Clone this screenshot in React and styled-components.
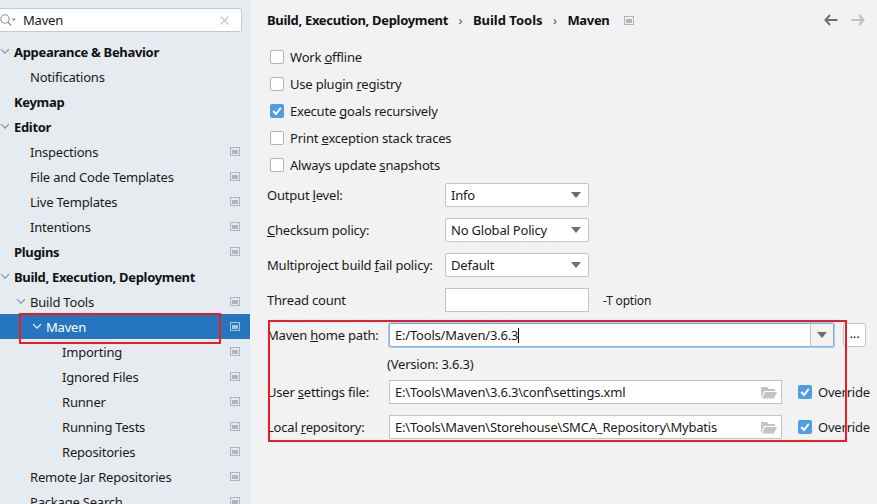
import React from "react";
import styled, { createGlobalStyle } from "styled-components";

const tree = [
  { label: "Appearance & Behavior", level: 0, bold: true, open: true },
  { label: "Notifications", level: 1 },
  { label: "Keymap", level: 0, bold: true },
  { label: "Editor", level: 0, bold: true, open: true },
  { label: "Inspections", level: 1, badge: true },
  { label: "File and Code Templates", level: 1, badge: true },
  { label: "Live Templates", level: 1, badge: true },
  { label: "Intentions", level: 1, badge: true },
  { label: "Plugins", level: 0, bold: true, badge: true },
  { label: "Build, Execution, Deployment", level: 0, bold: true, open: true },
  { label: "Build Tools", level: 1, open: true, badge: true },
  { label: "Maven", level: 2, open: true, badge: true, selected: true },
  { label: "Importing", level: 3, badge: true },
  { label: "Ignored Files", level: 3, badge: true },
  { label: "Runner", level: 3, badge: true },
  { label: "Running Tests", level: 3, badge: true },
  { label: "Repositories", level: 3, badge: true },
  { label: "Remote Jar Repositories", level: 1, badge: true },
  { label: "Package Search", level: 1, badge: true },
];

const ProjectIcon = ({ color = "#afb5ba" }) => (
  <svg width="10" height="9" viewBox="0 0 10 9">
    <rect x="0.5" y="0.5" width="9" height="8" fill="none" stroke={color} />
    <rect x="2" y="3" width="6" height="4" fill={color} />
  </svg>
);

const Chevron = ({ color = "#8d9094" }) => (
  <svg width="10" height="7" viewBox="0 0 10 7">
    <path d="M1 1.2 L5 5.2 L9 1.2" fill="none" stroke={color} strokeWidth="1.2" />
  </svg>
);

const SearchIcon = () => (
  <svg width="17" height="14" viewBox="0 0 17 14">
    <circle cx="5" cy="6" r="4.2" fill="none" stroke="#8f9499" strokeWidth="1.1" />
    <path d="M8 9 L11 12.5" stroke="#8f9499" strokeWidth="1.3" />
    <path d="M11.5 5.5 H16 L13.75 8 Z" fill="#8f9499" />
  </svg>
);

const ClearIcon = () => (
  <svg width="9" height="9" viewBox="0 0 9 9">
    <path d="M0.5 0.5 L8.5 8.5 M8.5 0.5 L0.5 8.5" stroke="#c4c7ca" strokeWidth="1.1" />
  </svg>
);

const CheckMark = () => (
  <svg width="14" height="14" viewBox="0 0 14 14">
    <path d="M3.2 7 L6 10 L10.8 3.8" fill="none" stroke="#fff" strokeWidth="1.9" />
  </svg>
);

const FolderIcon = () => (
  <svg width="16" height="13" viewBox="0 0 16 13">
    <path d="M0 1 H6 L7.5 3 H14 V5 H3.2 L0 12 Z" fill="#c2c5c7" />
    <path d="M4 6 H16 L13 12.5 H1 Z" fill="#c2c5c7" />
  </svg>
);

const ArrowIcon = ({ color, flip }) => (
  <svg width="14" height="12" viewBox="0 0 14 12" style={flip ? { transform: "scaleX(-1)" } : undefined}>
    <path d="M6 1 L1.5 6 L6 11 M2 6 H13.5" fill="none" stroke={color} strokeWidth="2" />
  </svg>
);

const CheckRow = ({ checked, children }) => (
  <CheckLine>
    <CheckBox $checked={checked}>{checked && <CheckMark />}</CheckBox>
    <CheckText>{children}</CheckText>
  </CheckLine>
);

const Select = ({ value }) => (
  <SelectBox>
    {value}
    <Caret />
  </SelectBox>
);

export default function App() {
  return (
    <Window>
      <GlobalStyle />
      <Sidebar>
        <SearchBox>
          <SearchIcon />
          <SearchText>Maven</SearchText>
          <ClearIcon />
        </SearchBox>
        <Tree>
          {tree.map((item) => (
            <TreeRow key={item.label} $level={item.level} $selected={item.selected} $bold={item.bold}>
              {item.open && (
                <Toggle>
                  <Chevron color={item.selected ? "#fff" : "#8d9094"} />
                </Toggle>
              )}
              <TreeLabel>{item.label}</TreeLabel>
              {item.badge && (
                <Badge>
                  <ProjectIcon color={item.selected ? "#a9c6e2" : "#afb5ba"} />
                </Badge>
              )}
            </TreeRow>
          ))}
        </Tree>
        <Highlight />
      </Sidebar>
      <Content>
        <Header>
          <Crumb $spacing={-0.32}>Build, Execution, Deployment</Crumb>
          <Sep>›</Sep>
          <Crumb $spacing={0}>Build Tools</Crumb>
          <Sep>›</Sep>
          <Crumb $spacing={-0.32}>Maven</Crumb>
          <HeaderBadge>
            <ProjectIcon />
          </HeaderBadge>
          <NavArrows>
            <ArrowIcon color="#6e6e6e" />
            <ArrowIcon color="#c0c0c0" flip />
          </NavArrows>
        </Header>
        <Checks>
          <CheckRow>Work <u>o</u>ffline</CheckRow>
          <CheckRow>Use plugin <u>r</u>egistry</CheckRow>
          <CheckRow checked>Execute <u>g</u>oals recursively</CheckRow>
          <CheckRow>Print <u>e</u>xception stack traces</CheckRow>
          <CheckRow>Always update <u>s</u>napshots</CheckRow>
        </Checks>
        <OptionGrid>
          <FieldLabel>Output <u>l</u>evel:</FieldLabel>
          <Select value="Info" />
          <span />
          <FieldLabel><u>C</u>hecksum policy:</FieldLabel>
          <Select value="No Global Policy" />
          <span />
          <FieldLabel>Multiproject build <u>f</u>ail policy:</FieldLabel>
          <Select value="Default" />
          <span />
          <FieldLabel>Thread count</FieldLabel>
          <PlainInput />
          <Hint>-T option</Hint>
        </OptionGrid>
        <PathGrid>
          <FieldLabel>Maven <u>h</u>ome path:</FieldLabel>
          <HomeCell>
            <HomeField>
              <HomeText>E:/Tools/Maven/3.6.3<Cursor /></HomeText>
              <HomeDrop>
                <Caret />
              </HomeDrop>
            </HomeField>
            <MoreButton>...</MoreButton>
          </HomeCell>
          <span />
          <Version>(Version: 3.6.3)</Version>
          <FieldLabel>User <u>s</u>ettings file:</FieldLabel>
          <PathCell>
            <PathField>
              <span>E:\Tools\Maven\3.6.3\conf\settings.xml</span>
              <FolderIcon />
            </PathField>
            <CheckRow checked>Override</CheckRow>
          </PathCell>
          <FieldLabel>Local <u>r</u>epository:</FieldLabel>
          <PathCell>
            <PathField>
              <span>E:\Tools\Maven\Storehouse\SMCA_Repository\Mybatis</span>
              <FolderIcon />
            </PathField>
            <CheckRow checked>Override</CheckRow>
          </PathCell>
        </PathGrid>
        <PathHighlight />
      </Content>
    </Window>
  );
}

const GlobalStyle = createGlobalStyle`
  html, body {
    margin: 0;
    padding: 0;
    background: #f2f2f2;
  }
  * {
    box-sizing: border-box;
  }
`;

const Window = styled.div`
  display: flex;
  width: 877px;
  height: 504px;
  overflow: hidden;
  font-family: "Noto Sans", "Open Sans", sans-serif;
  font-size: 13px;
  letter-spacing: -0.2px;
  color: #1a1a1a;
  background: #f2f2f2;
`;

const Sidebar = styled.aside`
  position: relative;
  width: 250px;
  flex-shrink: 0;
  background: #e6ebf0;
  padding-top: 8px;
`;

const SearchBox = styled.div`
  display: flex;
  align-items: center;
  width: 242px;
  height: 24px;
  background: #fff;
  border: 1px solid #c6c9cc;
  border-left: none;
  border-radius: 0 2px 2px 0;
  padding-right: 12px;
`;

const SearchText = styled.span`
  flex: 1;
  margin-left: 6px;
`;

const Tree = styled.div`
  display: flex;
  flex-direction: column;
  margin-top: 7px;
`;

const TreeRow = styled.div`
  position: relative;
  display: flex;
  align-items: center;
  flex-shrink: 0;
  height: 25px;
  padding-left: ${(p) => 14 + p.$level * 16}px;
  padding-right: 10px;
  font-weight: ${(p) => (p.$bold ? 700 : 400)};
  letter-spacing: ${(p) => (p.$bold ? "-0.32px" : "-0.2px")};
  color: ${(p) => (p.$selected ? "#fff" : p.$bold ? "#111" : "#1a1a1a")};
  background: ${(p) => (p.$selected ? "#2675bf" : "transparent")};
`;

const Toggle = styled.span`
  position: absolute;
  display: flex;
  margin-left: -14px;
`;

const TreeLabel = styled.span`
  flex: 1;
  white-space: nowrap;
`;

const Badge = styled.span`
  display: flex;
`;

const Highlight = styled.div`
  position: absolute;
  left: 19px;
  top: 313px;
  width: 202px;
  height: 31px;
  border: 2px solid #ed1c24;
`;

const Content = styled.main`
  position: relative;
  flex: 1;
  padding: 0 0 0 17px;
`;

const Header = styled.header`
  display: flex;
  align-items: center;
  height: 40px;
  font-weight: 700;
  color: #111;
`;

const Crumb = styled.span`
  white-space: nowrap;
  letter-spacing: ${(p) => p.$spacing}px;
`;

const Sep = styled.span`
  margin: 0 10.5px;
  font-weight: 400;
  color: #555;
`;

const HeaderBadge = styled.span`
  display: flex;
  margin-left: 14px;
`;

const NavArrows = styled.span`
  display: flex;
  gap: 13px;
  margin-left: auto;
  padding-right: 12px;
`;

const Checks = styled.div`
  display: flex;
  flex-direction: column;
  gap: 5px;
  margin-top: 6px;
  padding-left: 3px;
`;

const CheckLine = styled.label`
  display: flex;
  align-items: center;
  gap: 6px;
  height: 22px;
  white-space: nowrap;
`;

const CheckText = styled.span`
  padding-bottom: 1px;
`;

const CheckBox = styled.span`
  display: flex;
  width: 14px;
  height: 14px;
  border-radius: 2px;
  background: ${(p) => (p.$checked ? "#4f9ee3" : "#fff")};
  border: ${(p) => (p.$checked ? "none" : "1px solid #b4b4b4")};
`;

const OptionGrid = styled.div`
  display: grid;
  grid-template-columns: 178px 144px auto;
  grid-auto-rows: 24px;
  row-gap: 11px;
  align-items: center;
  margin-top: 7px;
`;

const FieldLabel = styled.span`
  white-space: nowrap;
`;

const SelectBox = styled.div`
  display: flex;
  align-items: center;
  justify-content: space-between;
  height: 24px;
  padding: 0 6px 0 5px;
  background: #fff;
  border: 1px solid #c4c4c4;
  border-radius: 2px;
`;

const Caret = styled.span`
  width: 0;
  height: 0;
  border-left: 5px solid transparent;
  border-right: 5px solid transparent;
  border-top: 6px solid #6e6e6e;
  margin-right: 1px;
`;

const PlainInput = styled.div`
  height: 24px;
  background: #fff;
  border: 1px solid #c4c4c4;
`;

const Hint = styled.span`
  margin-left: 14px;
  font-size: 12px;
`;

const PathGrid = styled.div`
  display: grid;
  grid-template-columns: 122px 1fr;
  grid-template-rows: 24px 11px 24px 24px;
  row-gap: 11px;
  align-items: center;
  margin-top: 11px;
`;

const HomeCell = styled.div`
  display: flex;
  align-items: center;
  gap: 9px;
  padding-right: 11px;
`;

const HomeField = styled.div`
  display: flex;
  width: 445px;
  height: 24px;
  background: #fff;
  border: 1px solid #7fb0e6;
  border-radius: 2px;
  box-shadow: 0 0 0 1px #a9cbf0;
`;

const HomeText = styled.div`
  flex: 1;
  display: flex;
  align-items: center;
  padding-left: 5px;
`;

const Cursor = styled.span`
  display: inline-block;
  width: 1px;
  height: 15px;
  background: #000;
`;

const HomeDrop = styled.div`
  display: flex;
  align-items: center;
  justify-content: center;
  width: 23px;
  background: #f2f2f2;
  border-left: 1px solid #c4c4c4;
`;

const MoreButton = styled.div`
  width: 23px;
  height: 24px;
  background: #fff;
  border: 1px solid #c4c4c4;
  border-radius: 3px;
  text-align: center;
  line-height: 19px;
`;

const Version = styled.span`
  align-self: start;
  margin-top: -3px;
  margin-left: -2px;
  line-height: 18px;
`;

const PathCell = styled.div`
  display: flex;
  align-items: center;
  gap: 16px;
`;

const PathField = styled.div`
  display: flex;
  align-items: center;
  justify-content: space-between;
  width: 393px;
  height: 24px;
  padding: 0 4px 0 5px;
  background: #fff;
  border: 1px solid #c4c4c4;
  white-space: nowrap;
`;

const PathHighlight = styled.div`
  position: absolute;
  left: 18px;
  top: 320px;
  width: 579px;
  height: 122px;
  border: 2px solid #ed1c24;
`;
